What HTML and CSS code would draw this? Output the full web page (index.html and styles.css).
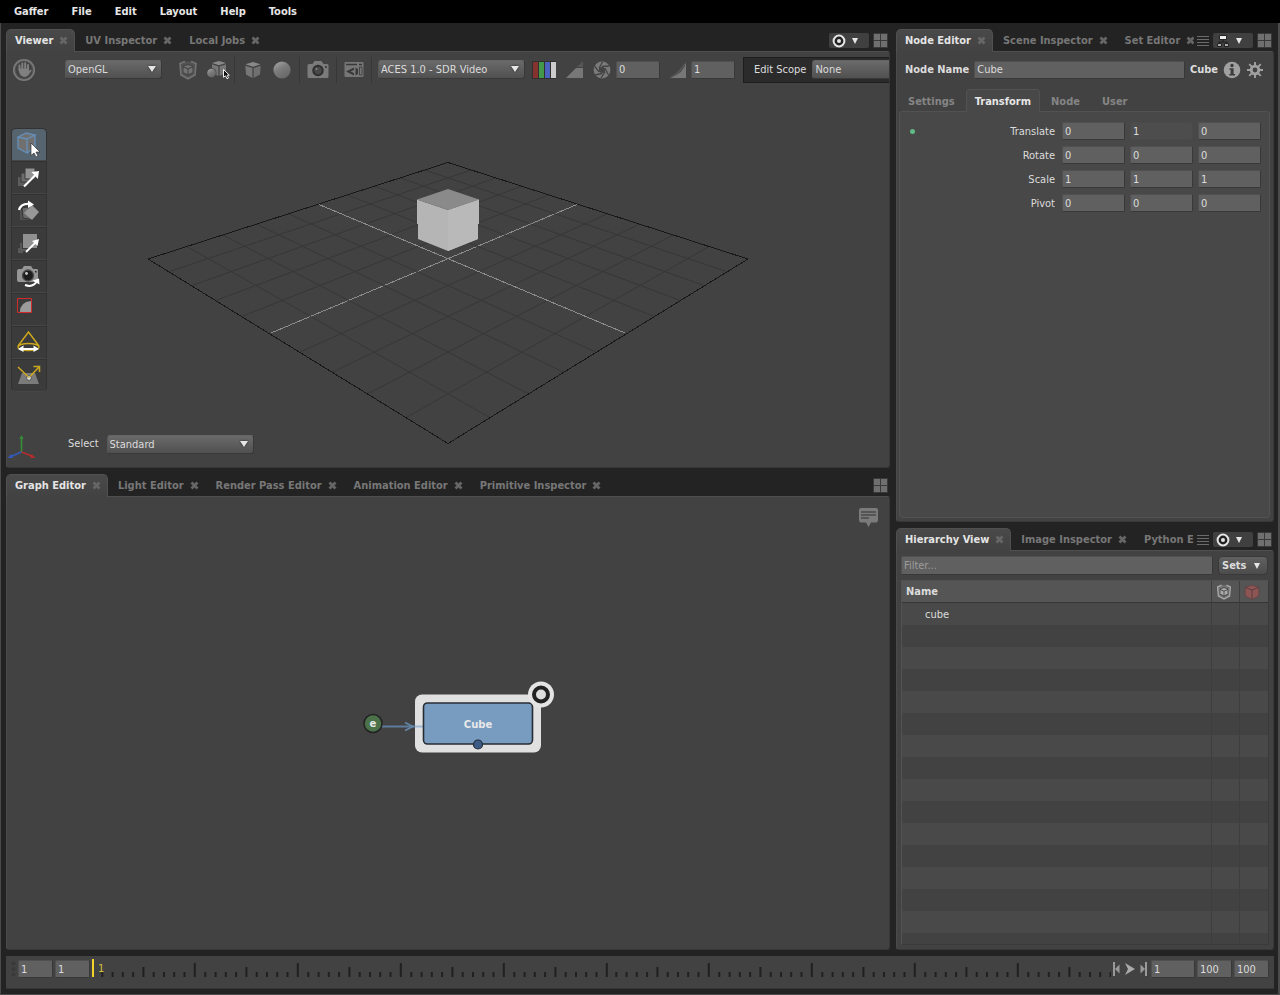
FILE: index.html
```html
<!DOCTYPE html>
<html lang="en">
<head>
<meta charset="utf-8">
<title>Gaffer</title>
<link rel="stylesheet" href="styles.css">
</head>
<body>
<svg class="defs" aria-hidden="true">
  <defs>
    <linearGradient id="ball" x1="0" y1="0" x2="0.6" y2="1"><stop offset="0" stop-color="#aaa"/><stop offset="0.5" stop-color="#7c7c7c"/><stop offset="1" stop-color="#686868"/></linearGradient>
    <symbol id="close" viewBox="0 0 9 9"><path d="M1.5 1.5L7.5 7.5M7.5 1.5L1.5 7.5" fill="none" stroke="currentColor" stroke-width="2.8"/></symbol>
    <symbol id="layout" viewBox="0 0 15 15"><rect width="15" height="15" rx="1" fill="#393939"/><path d="M1 1h6v6H1zM8 1h6v6H8zM1 8h6v6H1zM8 8h6v6H8z" fill="#6f6f6f"/></symbol>
    <symbol id="list" viewBox="0 0 12 12"><path d="M0 1.5h12M0 4.5h12M0 7.5h12M0 10.5h12" stroke="#6b6b6b"/></symbol>
    <symbol id="focus" viewBox="0 0 14 14"><circle cx="7" cy="7" r="5.4" fill="#222" stroke="#e6e6e6" stroke-width="2"/><circle cx="7" cy="7" r="2" fill="#e6e6e6"/></symbol>
    <symbol id="cubeglyph" viewBox="0 0 18 18"><path d="M9 1L16.5 3.3 9 5.8 1.5 3.3Z" fill="#898989"/><path d="M1.3 4.7L8.4 7.1V17L2 13.6Z" fill="#777"/><path d="M16.7 4.7L9.6 7.1V17L16 13.6Z" fill="#707070"/></symbol>
    <symbol id="shieldcube" viewBox="0 0 20 20"><path d="M7 1.5L2 3.500 3 15 10 18.8 17 15 18 3.500 13 1.500" fill="currentColor" fill-opacity=".35" stroke="currentColor" stroke-width="1.6"/><path d="M10 4L15.200 6V12.800L10 15.800 4.800 12.800V6Z" fill="#424242"/><path d="M10 5L14.300 6.500 10 8.300 5.700 6.500ZM5.500 7.600L9.500 9.300V14.300L5.500 12.200ZM14.500 7.600L10.500 9.300V14.300L14.500 12.200Z" fill="currentColor"/></symbol>
    <symbol id="camera" viewBox="0 0 22 19"><path d="M2 4H5.5L7.5 1H14.5L16.5 4H20Q21.5 4 21.5 5.5V16.5Q21.5 18 20 18H2Q.5 18 .5 16.5V5.5Q.5 4 2 4Z" fill="currentColor"/><circle cx="11" cy="10.500" r="5.7" fill="#2c2c2c"/><circle cx="11" cy="10.500" r="4.2" fill="#484848" stroke="#333"/><circle cx="9.5" cy="9" r="1" fill="#888"/><path d="M18 6h2v2h-2z" fill="#444"/></symbol>
    <symbol id="decade" viewBox="0 0 103 18" overflow="visible"><path d="M10.3 13v5M20.6 13v5M30.8 13v5M41.1 13v5M61.7 13v5M72 13v5M82.2 13v5M92.5 13v5M51.4 8v10M102.8 4v14"/></symbol>
  </defs>
</svg>

<div class="app">
  <nav class="menubar" aria-label="Main menu">
    <button>Gaffer</button><button>File</button><button>Edit</button><button>Layout</button><button>Help</button><button>Tools</button>
  </nav>

  <main class="workspace">
    <div class="columns">
      <div class="column left">
        <section class="panel">
          <header class="tabbar">
            <div class="tabs">
              <button class="tab active">Viewer<svg><use href="#close"/></svg></button>
              <button class="tab">UV Inspector<svg><use href="#close"/></svg></button>
              <button class="tab">Local Jobs<svg><use href="#close"/></svg></button>
            </div>
            <button class="target" aria-label="Focus target"><svg><use href="#focus"/></svg><i class="arrow"></i></button>
            <button class="layout" aria-label="Layout"><svg><use href="#layout"/></svg></button>
          </header>
          <div class="body viewer">
            <svg class="scene" viewBox="0 0 884 416" preserveAspectRatio="xMidYMin" aria-label="3D scene">
              <g transform="translate(-6 -51)">
                <g id="gridlines" fill="none" stroke="#373737">
                  <path d="M471.3 171L169.2 272.6M495.9 178.8L191.8 286.5M521.7 187.1L216 301.4M548.8 195.8L241.9 317.4M607.8 214.6L299.9 353.1M639.8 224.9L332.4 373.2M673.7 235.7L367.6 394.9M709.7 247.2L406 418.6"/>
                  <path d="M577 205.5L271 334" stroke="#8c8c8c" shape-rendering="crispEdges"/>
                </g>
                <use href="#gridlines" transform="translate(896 0) scale(-1 1)"/>
                <path d="M448 163.5L748 260 448 444.5 148 260Z" fill="none" stroke="#181818" shape-rendering="crispEdges"/>
                <path d="M417 200.5L448 211 479 200.5V225H478V240L448 252 418 240V225H417Z" fill="#b5b5b5"/>
                <path d="M448 211L479 200.5V225H478V240L448 252Z" fill="#b9b9b9"/>
                <path d="M448 190L479 200.5 448 211 417 200.5Z" fill="#8a8a8a"/>
              </g>
            </svg>
            <div class="toolbar">
              <button class="hand" aria-label="Pause"><svg width="24" height="24" viewBox="0 0 24 24"><circle cx="12" cy="12" r="11" fill="#7b7b7b"/><circle cx="12" cy="12" r="9" fill="#444" stroke="#555"/><path d="M7.5 12V7.5M10.3 11V5.5M13.2 11V5.3M16 12V7" stroke="#808080" stroke-width="1.9" stroke-linecap="round"/><path d="M6.6 10.5H17V13L18.8 11.5 19.7 12.4 16 17.5Q12.5 20.4 8.6 17.3Q6.6 15 6.6 10.5Z" fill="#808080"/></svg></button>
              <span class="pick renderer"><select aria-label="Renderer"><option>OpenGL</option></select></span>
              <div class="tools first">
                <button aria-label="Expansion"><svg class="dim" width="20" height="20"><use href="#shieldcube"/></svg></button>
                <button aria-label="Selection mask"><svg width="24" height="20" viewBox="0 0 24 20"><path d="M13 1L20 3 13 5.3 6 3Z" fill="#898989"/><path d="M6 4.3L12.4 6.5V16L6 13Z" fill="#777"/><path d="M20 4.3L13.6 6.5V16L20 13Z" fill="#777"/><circle cx="5.5" cy="13" r="5" fill="#444"/><circle cx="5.5" cy="13" r="4.3" fill="url(#ball)"/><path d="M17.5 9.5V17.3L19.5 15.8 21 18.8 22.5 18 21.2 15.2H23.3Z" fill="#111" stroke="#eee"/></svg></button>
              </div>
              <div class="tools solids">
                <button aria-label="Drawing mode"><svg width="18" height="18"><use href="#cubeglyph"/></svg></button>
                <button aria-label="Shading"><svg width="18" height="18" viewBox="0 0 18 18"><circle cx="9" cy="9" r="8.6" fill="url(#ball)"/></svg></button>
              </div>
              <div class="tools"><button aria-label="Camera"><svg class="grey" width="22" height="19"><use href="#camera"/></svg></button></div>
              <div class="tools"><button aria-label="Grid"><svg width="20" height="17" viewBox="0 0 20 17"><rect x=".5" y="1" width="19" height="15" rx="1" fill="#777"/><path d="M2 3.500h11M15 3.500h3" stroke="#383838" stroke-width="1.400"/><path d="M2 10.500L10 6.500V9L6.500 10.500 10 12V14.500Z" fill="#383838"/><path d="M11.500 6.500V14.500L14 13V8Z" fill="#383838"/><path d="M15.500 6h2.500v8h-2.500z" fill="none" stroke="#444"/></svg></button></div>
              <div class="tools display">
                <span class="pick colour"><select aria-label="Display transform"><option>ACES 1.0 - SDR Video</option></select></span>
                <button aria-label="Channels"><svg width="24" height="18" viewBox="0 0 24 18"><path d="M0 0h24v18H0z" fill="#303030"/><path d="M1 1h5v16H1z" fill="#86322f"/><path d="M7 1h5v16H7z" fill="#43984a"/><path d="M13 1h5v16h-5z" fill="#4c62bf"/><path d="M19 1h5v16h-5z" fill="#ccc"/></svg></button>
                <button class="spaced" aria-label="Clipping"><svg width="17" height="18" viewBox="0 0 17 18"><path d="M17 0V6H11Z" fill="#565656"/><path d="M10 7H17V17H0Z" fill="#777"/></svg></button>
                <button class="spaced" aria-label="Exposure reset"><svg width="18" height="18" viewBox="0 0 18 18"><circle cx="9" cy="9" r="8.4" fill="#7a7a7a"/><path d="M9 5.5L12 7.2V10.8L9 12.5 6 10.8V7.2Z" fill="#444"/><path d="M9 5.5L16 5M12 7.2L15.5 14M12 10.8L8 17M9 12.5L2 14M6 10.8L1.5 5M6 7.2L9.5 1" stroke="#444" stroke-width="1.3"/></svg></button>
                <input class="number" aria-label="Exposure" value="0">
                <button class="spaced" aria-label="Gamma reset"><svg width="16" height="18" viewBox="0 0 16 18"><path d="M16 1V17H0Q14 12 16 1Z" fill="#777"/><path d="M0 17Q9 12 14.500 3Q11 12 0 17Z" fill="#585858" stroke="#585858"/></svg></button>
                <input class="number" aria-label="Gamma" value="1">
              </div>
              <div class="scope"><label for="scope">Edit Scope</label><span class="pick"><select id="scope"><option>None</option></select></span></div>
            </div>
            <div class="toolbox">
              <button class="on" aria-label="Selection"><svg viewBox="0 0 36 33"><path d="M7 9L15 5 24 7V19L16 25 7 20Z" fill="#707070"/><path d="M7 9L15 5 24 7 16 11ZM7 9V20L16 25V11M16 25L24 19V7" fill="none" stroke="#648fb9" stroke-width="1.3"/><path d="M20 15V27.5L23 25 25 29 27 28 25 24H29Z" fill="#fff" stroke="#222" stroke-width=".6"/></svg></button>
              <button aria-label="Translate"><svg viewBox="0 0 36 33"><path d="M7 16h9v9H7z" fill="#5c5c5c"/><path d="M10 12h9v9h-9z" fill="#6c6c6c" stroke="#3b3b3b"/><path d="M14 7h10v11H14z" fill="#929292" stroke="#3b3b3b"/><path d="M13 25.5L25 13.5" stroke="#fff" stroke-width="2.2"/><path d="M20.5 11L28 10 26.8 18Z" fill="#fff"/></svg></button>
              <button aria-label="Rotate"><svg viewBox="0 0 36 33"><path d="M9 15V26H20Z" fill="#505050"/><path d="M11 14L12 24 23 26 17 13Z" fill="#6b6b6b" stroke="#363636"/><path d="M13 19L21 11 28 18 21 26Z" fill="#979797"/><path d="M8 16Q10 9 19 10" fill="none" stroke="#fff" stroke-width="2.3"/><path d="M17 6.5L23 10.5 17 14Z" fill="#fff"/></svg></button>
              <button aria-label="Scale"><svg viewBox="0 0 36 33"><path d="M8 21v4h4M10 16v7h7" fill="none" stroke="#666" stroke-width="1.4"/><path d="M12 7h14v14H12z" fill="#909090"/><path d="M15 25L25 15" stroke="#fff" stroke-width="1.8"/><path d="M21 14L28 12 26.5 19Z" fill="#fff"/></svg></button>
              <button aria-label="Camera"><svg viewBox="0 0 36 33"><path d="M6 11Q6 9 8 9H11L13 6H20L22 9H26Q27 9 27 11V20Q27 22 25 22H8Q6 22 6 20Z" fill="#969696"/><circle cx="17" cy="15.5" r="5.5" fill="#1d1d1d" stroke="#4b4b4b" stroke-width="1.3"/><circle cx="15.5" cy="13.5" r="1.4" fill="#ccc"/><path d="M24 11h1.5v1.5H24z" fill="#222"/><path d="M14 25Q22 28 26 21" fill="none" stroke="#fff" stroke-width="2"/><path d="M21.5 20.5L28 18.5 28.5 24.5Z" fill="#fff"/></svg></button>
              <button aria-label="Crop window"><svg viewBox="0 0 36 33"><path d="M20 8V19H9Q9 9 20 8Z" fill="#9b9b9b"/><path d="M6.5 5.5h14v14h-14z" fill="none" stroke="#d32b2b"/></svg></button>
              <button aria-label="Light"><svg viewBox="0 0 36 33"><path d="M7 20L17.5 6 28 20" fill="none" stroke="#cba71d" stroke-width="1.5"/><ellipse cx="17.5" cy="21" rx="10.5" ry="3.5" fill="none" stroke="#cba71d" stroke-width="1.4"/><path d="M12 23H23" stroke="#fff" stroke-width="2"/><path d="M12.5 19.5V26L7 23ZM22.5 19.5V26L28 23Z" fill="#fff"/></svg></button>
              <button aria-label="Light position"><svg viewBox="0 0 36 33"><path d="M11 14H24L28 25H7Z" fill="#7b7b7b"/><path d="M7 8L18 18.5 28 8M22.5 7.5H28.5V13" fill="none" stroke="#cba71d" stroke-width="1.5"/><circle cx="18" cy="19" r="2.4" fill="#ddd" stroke="#555"/><path d="M14 15L18 18.5 22 15" fill="none" stroke="#cba71d"/></svg></button>
            </div>
            <div class="viewfoot">
              <svg class="gnomon" width="30" height="26" viewBox="0 0 30 26"><path d="M14.500 17V2" stroke="#348f34" stroke-width="1.6"/><path d="M12.500 4L14.500 0 16.500 4Z" fill="#348f34"/><path d="M14.500 17L4 21.5" stroke="#3359b8" stroke-width="1.8"/><path d="M.5 23L4.500 19 6 23Z" fill="#3359b8"/><path d="M14.500 17L26 21.5" stroke="#b32d2d" stroke-width="1.8"/><path d="M28.500 23L24.500 19 23 23Z" fill="#b32d2d"/></svg>
              <label for="mode">Select</label><span class="pick colour"><select id="mode"><option>Standard</option></select></span>
            </div>
          </div>
        </section>

        <section class="panel">
          <header class="tabbar">
            <div class="tabs">
              <button class="tab active">Graph Editor<svg><use href="#close"/></svg></button>
              <button class="tab">Light Editor<svg><use href="#close"/></svg></button>
              <button class="tab">Render Pass Editor<svg><use href="#close"/></svg></button>
              <button class="tab">Animation Editor<svg><use href="#close"/></svg></button>
              <button class="tab">Primitive Inspector<svg><use href="#close"/></svg></button>
            </div>
            <button class="layout" aria-label="Layout"><svg><use href="#layout"/></svg></button>
          </header>
          <div class="body graph">
            <svg class="scene" viewBox="0 0 884 453" aria-label="Node graph">
              <g transform="translate(-6 -496)">
                <rect x="415" y="694" width="126" height="58" rx="7" fill="#e0e0e0"/>
                <path d="M382 726H415" stroke="#5c7c9c" stroke-width="2"/><path d="M415 726H424" stroke="#9fb9d3" stroke-width="2"/>
                <path d="M405 722L413 726 405 730" fill="none" stroke="#6587a8" stroke-width="1.5"/>
                <rect x="423.5" y="702.5" width="109" height="41" rx="4" fill="#789cc0" stroke="#272c32" stroke-width="1.6"/>
                <text x="478" y="727" text-anchor="middle" class="nodename">Cube</text>
                <circle cx="478" cy="744" r="4.5" fill="#3d5b87" stroke="#242b36" stroke-width="1.2"/>
                <circle cx="373" cy="723" r="9" fill="#4b7249" stroke="#222" stroke-width="1.5"/>
                <text x="373" y="726" text-anchor="middle" class="nodename">e</text>
                <circle cx="541" cy="694" r="13" fill="#e4e4e4"/><circle cx="541" cy="694" r="7" fill="#ddd" stroke="#222" stroke-width="4"/>
              </g>
            </svg>
            <button class="note" aria-label="Annotations"><svg width="19" height="19" viewBox="0 0 19 19"><path d="M2 0H17Q19 0 19 2V12Q19 14.5 17 14.5H12L9.5 19 7 14.5H2Q0 14.5 0 12V2Q0 0 2 0Z" fill="#7b7b7b"/><path d="M2 4H17M2 7H17M2 10H10" stroke="#494949" stroke-width="1.6"/></svg></button>
          </div>
        </section>
      </div>

      <div class="column right">
        <section class="panel">
          <header class="tabbar">
            <div class="tabs">
              <button class="tab active">Node Editor<svg><use href="#close"/></svg></button>
              <button class="tab">Scene Inspector<svg><use href="#close"/></svg></button>
              <button class="tab">Set Editor<svg><use href="#close"/></svg></button>
            </div>
            <button class="more" aria-label="All tabs"><svg><use href="#list"/></svg></button>
            <button class="target" aria-label="Follow selection"><svg viewBox="0 0 14 14"><path d="M7 5V8M3 11V8H11V11" fill="none" stroke="#1e1e1e" stroke-width="1.2"/><path d="M3.5 1.5h7v4h-7z" fill="#eee" stroke="#222"/><path d="M1.500 9.500h4v3h-4zM8.500 9.500h4v3h-4z" fill="#aaa" stroke="#222"/></svg><i class="arrow"></i></button>
            <button class="layout" aria-label="Layout"><svg><use href="#layout"/></svg></button>
          </header>
          <div class="body node">
            <div class="namerow">
              <label for="nodename">Node Name</label><input id="nodename" value="Cube"><strong>Cube</strong>
              <button aria-label="Information"><svg width="18" height="18" viewBox="0 0 18 18"><circle cx="9" cy="9" r="8.3" fill="#a0a0a0"/><circle cx="9" cy="4.5" r="1.7" fill="#3c3c3c"/><path d="M6.5 7.3H10.6V13H12V14.5H6.3V13H7.6V8.7H6.5Z" fill="#3c3c3c"/></svg></button>
              <button aria-label="Settings"><svg width="18" height="18" viewBox="0 0 18 18"><circle cx="9" cy="9" r="3.8" fill="none" stroke="#a0a0a0" stroke-width="2.8"/><path d="M9 5V1M9 13V17M5 9H1M13 9H17M6.2 6.2L3.2 3.2M11.8 6.2L14.8 3.2M6.2 11.8L3.2 14.8M11.8 11.8L14.8 14.8" stroke="#a0a0a0" stroke-width="1.9"/></svg></button>
            </div>
            <div class="subtabs"><button>Settings</button><button class="active">Transform</button><button>Node</button><button>User</button></div>
            <div class="plugs">
              <div class="plug changed"><span>Translate</span><input aria-label="Translate x" value="0"><input class="locked" aria-label="Translate y" value="1"><input aria-label="Translate z" value="0"></div>
              <div class="plug"><span>Rotate</span><input aria-label="Rotate x" value="0"><input aria-label="Rotate y" value="0"><input aria-label="Rotate z" value="0"></div>
              <div class="plug"><span>Scale</span><input aria-label="Scale x" value="1"><input aria-label="Scale y" value="1"><input aria-label="Scale z" value="1"></div>
              <div class="plug"><span>Pivot</span><input aria-label="Pivot x" value="0"><input aria-label="Pivot y" value="0"><input aria-label="Pivot z" value="0"></div>
            </div>
          </div>
        </section>

        <section class="panel">
          <header class="tabbar">
            <div class="tabs">
              <button class="tab active">Hierarchy View<svg><use href="#close"/></svg></button>
              <button class="tab">Image Inspector<svg><use href="#close"/></svg></button>
              <button class="tab">Python E</button>
            </div>
            <button class="more" aria-label="All tabs"><svg><use href="#list"/></svg></button>
            <button class="target" aria-label="Focus target"><svg><use href="#focus"/></svg><i class="arrow"></i></button>
            <button class="layout" aria-label="Layout"><svg><use href="#layout"/></svg></button>
          </header>
          <div class="body hierarchy">
            <div class="filter"><input aria-label="Filter" placeholder="Filter..."><button class="sets">Sets<i class="arrow"></i></button></div>
            <div class="listing">
              <table>
                <thead><tr><th>Name</th><th class="flag"><svg class="light" width="16" height="16"><use href="#shieldcube"/></svg></th><th class="flag"><svg width="16" height="16" viewBox="0 0 16 16"><path d="M8 1L15 3.5V12L8 15.5 1 12V3.5Z" fill="#8e5555" stroke="#5f4444"/><path d="M1 3.5L8 6 15 3.5M8 6V15" fill="none" stroke="#5c3c3c"/></svg></th></tr></thead>
                <tbody>
                  <tr><td>cube</td><td></td><td></td></tr>
                  <tr><td></td><td></td><td></td></tr><tr><td></td><td></td><td></td></tr><tr><td></td><td></td><td></td></tr>
                  <tr><td></td><td></td><td></td></tr><tr><td></td><td></td><td></td></tr><tr><td></td><td></td><td></td></tr>
                  <tr><td></td><td></td><td></td></tr><tr><td></td><td></td><td></td></tr><tr><td></td><td></td><td></td></tr>
                  <tr><td></td><td></td><td></td></tr><tr><td></td><td></td><td></td></tr><tr><td></td><td></td><td></td></tr>
                  <tr><td></td><td></td><td></td></tr><tr><td></td><td></td><td></td></tr><tr><td></td><td></td><td></td></tr>
                </tbody>
              </table>
            </div>
          </div>
        </section>
      </div>
    </div>

    <footer class="timeline">
      <svg class="grip" width="5" height="16" viewBox="0 0 5 16"><path d="M2.5 2.5v.1M2.5 8v.1M2.5 13.5v.1" stroke="#393939" stroke-width="4" stroke-linecap="round"/></svg>
      <input aria-label="Start frame" value="1"><input aria-label="Range start" value="1">
      <svg class="ruler" viewBox="0 0 1019 20" preserveAspectRatio="none" aria-label="Frames">
        <g stroke="#202020" stroke-width="2">
          <use href="#decade" x="0" width="103" height="18"/><use href="#decade" x="103" width="103" height="18"/><use href="#decade" x="206" width="103" height="18"/><use href="#decade" x="309" width="103" height="18"/><use href="#decade" x="412" width="103" height="18"/><use href="#decade" x="514" width="103" height="18"/><use href="#decade" x="617" width="103" height="18"/><use href="#decade" x="720" width="103" height="18"/><use href="#decade" x="823" width="103" height="18"/><use href="#decade" x="926" width="103" height="18"/>
        </g>
        <path d="M1 0V18" stroke="#f2d32c" stroke-width="2"/><text x="6" y="13">1</text>
      </svg>
      <div class="transport">
        <button aria-label="First frame"><svg width="7" height="14" viewBox="0 0 7 14"><path d="M1 0V14" stroke="#999" stroke-width="2"/><path d="M6.5 2.5V11.500L2 7Z" fill="#999"/></svg></button>
        <button aria-label="Play"><svg width="10" height="12" viewBox="0 0 10 12"><path d="M0 0L10 6 0 12 3 6Z" fill="#aaa"/></svg></button>
        <button aria-label="Last frame"><svg width="7" height="14" viewBox="0 0 7 14"><path d="M6 0V14" stroke="#999" stroke-width="2"/><path d="M.5 2.5V11.500L5 7Z" fill="#999"/></svg></button>
      </div>
      <input class="wide" aria-label="Current frame" value="1"><input aria-label="Range end" value="100"><input aria-label="End frame" value="100">
    </footer>
  </main>
</div>
</body>
</html>
```
FILE: styles.css
```css
* { box-sizing: border-box; }
body { margin: 0; background: #232323; }
body, button, input, select {
  font-family: "DejaVu Sans Condensed", "DejaVu Sans", sans-serif;
  font-size: 11px;
  color: #dcdcdc;
}
button { background: none; border: 0; padding: 0; font-weight: bold; display: flex; align-items: center; }
svg { display: block; flex: none; }
.defs { position: absolute; width: 0; height: 0; }

.app { height: 100vh; display: flex; flex-direction: column; }
.menubar { display: flex; gap: 23px; height: 23px; flex: none; padding-left: 14px; background: #000; }
.menubar button { color: #e6e6e6; }
.workspace {
  flex: 1; min-height: 0; display: flex; flex-direction: column; gap: 6px;
  padding: 6px 4px 5px 5px;
  border: solid #4b4b4b; border-width: 0 2px 1px 1px;
}
.columns { flex: 1; min-height: 0; display: grid; grid-template-columns: 884fr 378fr; gap: 6px; }
.column { display: grid; gap: 6px; min-width: 0; min-height: 0; }
.left { grid-template-rows: 439fr 476fr; }
.right { grid-template-rows: 493fr 422fr; }
.panel { display: flex; flex-direction: column; min-width: 0; min-height: 0; }

.tabbar { display: flex; align-items: center; height: 23px; flex: none; padding-right: 2px; margin-bottom: -1px; position: relative; z-index: 1; }
.tabs { display: flex; gap: 1px; flex: 1; height: 23px; min-width: 0; overflow: hidden; }
.tab {
  flex: none; gap: 6px; padding: 0 6px 2px 8px; color: #777;
  border: 1px solid transparent; border-bottom: 0; border-radius: 5px 5px 0 0;
}
.tab svg { width: 9px; height: 9px; color: #666; }
.tab.active { color: #e4e4e4; background: linear-gradient(#494949, #424242); border-color: #505050; }
.target { width: 40px; height: 15px; padding-left: 3px; gap: 6px; background: #404040; border-radius: 2px; margin-right: 4px; }
.target svg { width: 14px; height: 14px; }
.layout svg { width: 15px; height: 15px; }
.more { padding: 0 4px 0 3px; }
.more svg { width: 12px; height: 12px; }
.arrow { width: 0; height: 0; border: solid transparent; border-width: 6px 3px 0; border-top-color: #e6e6e6; }

.body {
  flex: 1; min-height: 0; position: relative; display: flex; flex-direction: column; overflow: hidden;
  background: #424242; border: 1px solid; border-color: #4f4f4f #383838 #383838 #4b4b4b;
  border-radius: 0 3px 3px 3px;
}
.scene { position: absolute; inset: -1px; width: calc(100% + 2px); height: calc(100% + 2px); }
.viewer .scene { inset: -2px -1px; }

input {
  min-width: 0; height: 18px; padding: 0 2px; background: #606060;
  border: 1px solid; border-color: #505050 #383838 #383838 #505050; border-radius: 2px;
}
input::placeholder { color: #9c9c9c; opacity: 1; }
.pick { position: relative; display: block; flex: none; }
.pick select {
  appearance: none; display: block; width: 100%; height: 19px; padding: 0 2px;
  background: linear-gradient(#6a6a6a, #505050); border: 1px solid; border-color: #656565 #393939 #393939 #585858; border-radius: 3px;
}
.pick::after {
  content: ""; position: absolute; right: 6px; top: 6px;
  border: solid transparent; border-width: 6px 4px 0; border-top-color: #e6e6e6; filter: drop-shadow(0 0 1px #222); pointer-events: none;
}

.toolbar { position: relative; display: flex; align-items: center; height: 35px; flex: none; }
.hand { width: 58px; padding-left: 5px; flex: none; }
.renderer { width: 97px; }
.tools { display: flex; align-items: center; height: 26px; flex: none; padding: 0 7px; border-left: 1px solid #373737; }
.tools.first { gap: 8px; padding: 0 4px 0 16px; border: 0; }
.tools.solids { gap: 11px; padding: 0 8px 0 9px; }
.dim { color: #737373; }
.grey { color: #7b7b7b; }
.light { color: #aaa; }
.tools.display { padding: 0 8px 0 6px; }
.display .colour { margin-right: 7px; }
.colour { width: 147px; }
.display .spaced { margin-left: 10px; }
.number { width: 44px; margin-left: 5px; }
.scope { display: flex; align-items: center; gap: 6px; height: 26px; padding-left: 10px; flex: none; background: #2b2b2b; border: 1px solid #1d1d1d; }
.scope .pick { width: 120px; }

.toolbox { position: relative; width: 36px; margin: 41px 0 0 4px; }
.toolbox button { width: 36px; height: 33px; background: #3b3b3b; border: 1px solid #323232; border-bottom-color: #464646; }
.toolbox svg { width: 36px; height: 33px; margin: -1px; }
.toolbox .on { background: #566470; }
.toolbox button:first-child { border-radius: 5px 5px 0 0; }
.toolbox button:last-child { border-radius: 0 0 5px 5px; }
.viewfoot { position: relative; display: flex; align-items: flex-start; height: 26px; margin: auto 0 6px 0; }
.gnomon { margin-right: 31px; }
.viewfoot label { margin-right: 8px; line-height: 18px; }

.nodename { font-family: "DejaVu Sans", sans-serif; font-size: 10px; font-weight: bold; fill: #e8e8e8; }
.note { position: absolute; top: 11px; right: 11px; }

.node { padding: 8px 3px 3px 2px; }
.namerow { display: flex; align-items: center; gap: 5px; height: 19px; padding: 0 6px; font-weight: bold; }
.namerow input { flex: 1; }
.subtabs { display: flex; height: 23px; margin: 10px 0 -1px; flex: none; position: relative; }
.subtabs button { padding: 0 10px; color: #858585; border: 1px solid transparent; border-bottom: 0; border-radius: 4px 4px 0 0; }
.subtabs button:first-child { padding-left: 8px; }
.subtabs .active { padding: 0 8px; color: #e6e6e6; background: #484848; border-color: #525252; }
.plugs {
  flex: 1; display: flex; flex-direction: column; gap: 6px; padding: 10px 8px 0;
  background: #484848; border: 1px solid #525252; border-radius: 3px;
}
.plug { display: grid; grid-template-columns: 1fr 63px 63px 63px; gap: 5px; align-items: center; }
.plug span { text-align: right; padding-right: 2px; }
.changed span { display: flex; align-items: center; justify-content: space-between; }
.changed span::before { content: ""; width: 5px; height: 5px; margin-left: 2px; background: #5fba86; border-radius: 50%; }
.locked { background: #4d4d4d; border-color: #4a4a4a; }

.hierarchy { padding: 5px 4px 4px; }
.filter { display: flex; gap: 5px; height: 19px; flex: none; padding-right: 1px; }
.filter input { flex: 1; height: 19px; }
.sets { width: 50px; padding: 0 7px 0 3px; justify-content: space-between; background: linear-gradient(#606060, #4c4c4c); border: 1px solid #393939; border-radius: 4px; }
.listing { flex: 1; min-height: 0; overflow: hidden; margin-top: 5px; border: 1px solid; border-color: #505050 #3a3a3a #3a3a3a #525252; }
table { width: 100%; border-collapse: separate; border-spacing: 0; table-layout: fixed; }
th, td { height: 22px; padding: 0 4px; text-align: left; border-right: 1px solid #3e3e3e; }
th:last-child, td:last-child { border-right: 0; }
th { background: #555; border-bottom: 1px solid #363636; }
td:first-child { padding-left: 23px; }
th.flag { width: 28px; padding: 0 4px; }
tbody tr:nth-child(odd) { background: #494949; }
tbody tr:nth-child(even) { background: #424242; }

.timeline {
  display: flex; align-items: center; height: 33px; flex: none; padding: 0 5px 6px; gap: 2px;
  background: #424242; border-bottom: 1px solid #353535;
}
.timeline input { width: 35px; flex: none; }
.timeline .wide { width: 44px; }
.ruler { flex: 1; min-width: 0; height: 20px; }
.ruler text { fill: #d6c13a; font-size: 11px; }
.transport { display: flex; align-items: center; gap: 5px; padding-right: 2px; }
```
